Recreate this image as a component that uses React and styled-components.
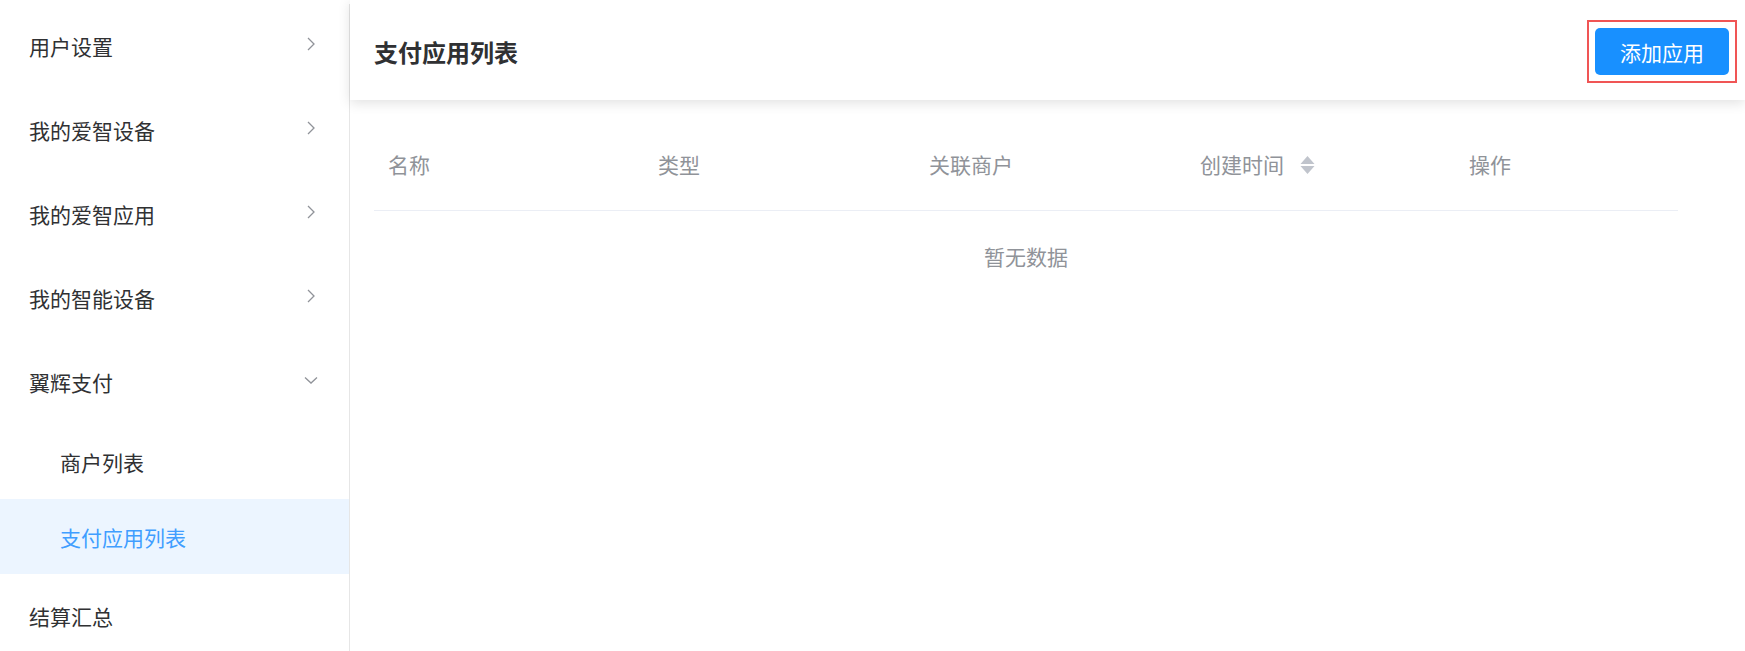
import React from "react";
import styled, { createGlobalStyle } from "styled-components";

const GlobalStyle = createGlobalStyle`
  html, body {
    margin: 0;
    padding: 0;
    background: #fff;
    font-family: "Noto Sans CJK SC", "Noto Sans", sans-serif;
  }
`;

const menu = [
  { label: "用户设置" },
  { label: "我的爱智设备" },
  { label: "我的爱智应用" },
  { label: "我的智能设备" },
  {
    label: "翼辉支付",
    open: true,
    children: [{ label: "商户列表" }, { label: "支付应用列表", active: true }],
  },
  { label: "结算汇总", bare: true },
];

const columns = [
  { title: "名称" },
  { title: "类型" },
  { title: "关联商户" },
  { title: "创建时间", sortable: true },
  { title: "操作" },
];

const Chevron = ({ open }) => (
  <svg width="14" height="14" viewBox="0 0 14 14" fill="none">
    {open ? (
      <path d="M1 4.5 L7 10 L13 4.5" stroke="#909399" strokeWidth="1.3" />
    ) : (
      <path d="M4 1 L10 7 L4 13" stroke="#909399" strokeWidth="1.3" />
    )}
  </svg>
);

const SortIcon = () => (
  <svg width="15" height="20" viewBox="0 0 15 20">
    <path d="M7.5 1 L14.5 9 L0.5 9 Z" fill="#c0c4cc" />
    <path d="M0.5 11 L14.5 11 L7.5 19 Z" fill="#c0c4cc" />
  </svg>
);

const App = () => {
  return (
    <Page>
      <GlobalStyle />
      <Sidebar>
        {menu.map((item) => (
          <React.Fragment key={item.label}>
            <MenuItem>
              <span>{item.label}</span>
              {!item.bare && <Chevron open={item.open} />}
            </MenuItem>
            {item.children &&
              item.children.map((sub) => (
                <SubItem key={sub.label} $active={sub.active}>
                  {sub.label}
                </SubItem>
              ))}
          </React.Fragment>
        ))}
      </Sidebar>
      <Main>
        <Header>
          <Title>支付应用列表</Title>
          <Highlight>
            <AddButton>添加应用</AddButton>
          </Highlight>
        </Header>
        <TableWrap>
          <HeadRow>
            {columns.map((col) => (
              <HeadCell key={col.title}>
                {col.title}
                {col.sortable && (
                  <SortWrap>
                    <SortIcon />
                  </SortWrap>
                )}
              </HeadCell>
            ))}
          </HeadRow>
          <Empty>暂无数据</Empty>
        </TableWrap>
      </Main>
    </Page>
  );
};

const Page = styled.div`
  display: flex;
  height: 100vh;
  overflow: hidden;
`;

const Sidebar = styled.nav`
  width: 349px;
  flex-shrink: 0;
  margin-top: 4px;
  border-right: 1px solid #e6e6e6;
  display: flex;
  flex-direction: column;
`;

const MenuItem = styled.div`
  height: 84px;
  flex-shrink: 0;
  display: flex;
  align-items: center;
  justify-content: space-between;
  padding: 0 31px 0 29px;
  font-size: 21px;
  color: #303133;

  svg {
    position: relative;
    top: -2px;
  }
`;

const SubItem = styled.div`
  height: 75px;
  flex-shrink: 0;
  display: flex;
  align-items: center;
  padding-left: 60px;
  font-size: 21px;
  color: ${(p) => (p.$active ? "#409eff" : "#303133")};
  background: ${(p) => (p.$active ? "#ecf5ff" : "transparent")};
`;

const Main = styled.main`
  flex: 1;
  display: flex;
  flex-direction: column;
  min-width: 0;
`;

const Header = styled.header`
  height: 100px;
  flex-shrink: 0;
  display: flex;
  align-items: center;
  justify-content: space-between;
  padding: 0 8px 0 24px;
  box-shadow: 0 3px 12px rgba(0, 0, 0, 0.12);
  position: relative;
  z-index: 1;
`;

const Title = styled.h1`
  margin: 0;
  font-size: 24px;
  font-weight: 700;
  color: #303133;
  position: relative;
  top: 1px;
`;

const Highlight = styled.div`
  display: flex;
  padding: 6px;
  margin-top: 3px;
  border: 2px solid #f05555;
`;

const AddButton = styled.button`
  width: 134px;
  height: 47px;
  border: none;
  border-radius: 5px;
  background: #1890ff;
  color: #fff;
  font-family: inherit;
  font-size: 21px;
`;

const TableWrap = styled.section`
  width: 1304px;
  margin: 22px 0 0 24px;
`;

const HeadRow = styled.div`
  display: grid;
  grid-template-columns: 270px 271px 271px 269px 1fr;
  height: 88px;
  border-bottom: 1px solid #ebeef5;
`;

const HeadCell = styled.div`
  display: flex;
  align-items: center;
  padding-left: 14px;
  padding-bottom: 4px;
  box-sizing: border-box;
  font-size: 21px;
  color: #909399;
`;

const SortWrap = styled.span`
  display: inline-flex;
  margin-left: 16px;
  margin-top: 2px;
`;

const Empty = styled.div`
  height: 90px;
  display: flex;
  align-items: center;
  justify-content: center;
  font-size: 21px;
  color: #909399;
`;

export default App;
